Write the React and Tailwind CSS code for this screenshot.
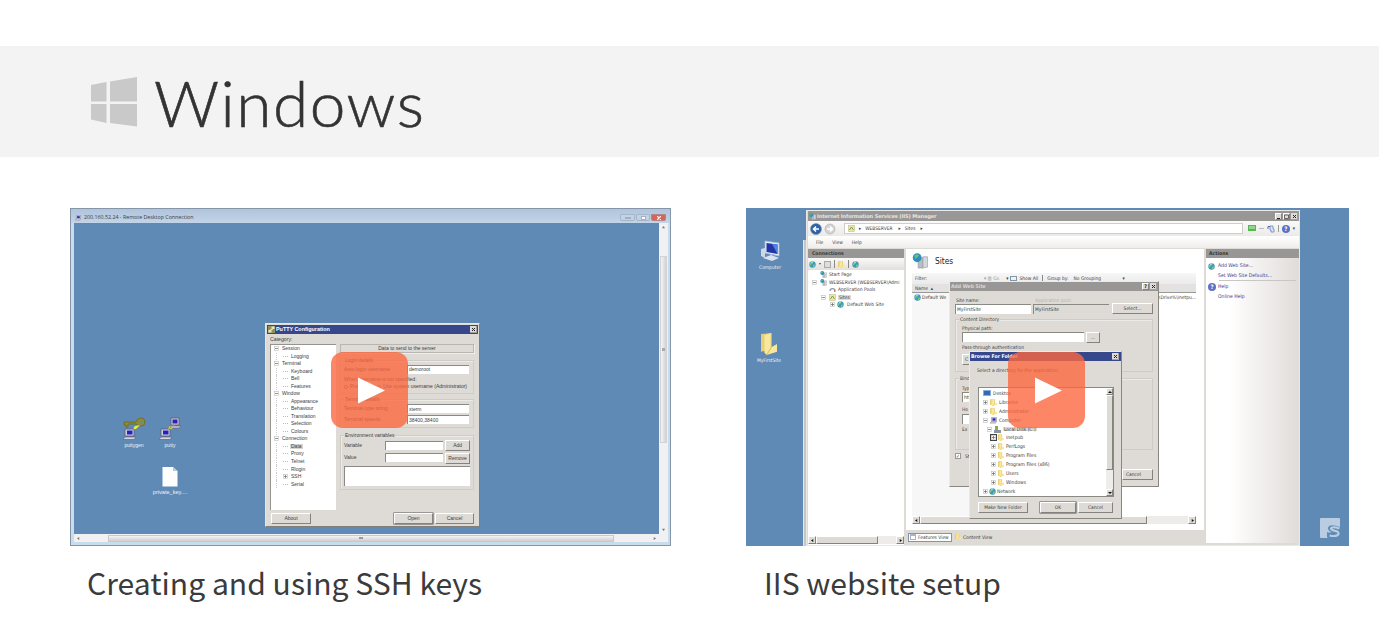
import React from "react";

/* ---------- shared pieces ---------- */

function Play({ className }) {
  return (
    <div
      className={
        "absolute z-20 flex h-[76px] w-[77px] items-center justify-center rounded-[12px] bg-[#fb6840]/80 " + className
      }
    >
      <svg className="ml-[3px] h-[27px] w-[29px]" viewBox="0 0 29 27">
        <path d="M1 0.5L28 13.5L1 26.5Z" fill="#fff" />
      </svg>
    </div>
  );
}

function Btn({ children, className = "" }) {
  return (
    <div
      className={
        "flex items-center justify-center border-[0.5px] border-b-[1px] border-r-[1px] border-white border-b-[#85827e] border-r-[#85827e] bg-[#dedbd6] " +
        className
      }
    >
      {children}
    </div>
  );
}

function Field({ children, className = "" }) {
  return (
    <div
      className={
        "flex items-center border-l border-t border-l-[#8b8984] border-t-[#8b8984] pl-[1px] " + className
      }
    >
      {children}
    </div>
  );
}

function Group({ title, children, className = "" }) {
  return (
    <div className={"relative flex flex-col border border-[#cfccc7] shadow-[inset_1px_1px_0_#eceae7] " + className}>
      <span className="absolute -top-[3px] left-[3px] bg-[#dedbd6] px-[1px]">{title}</span>
      {children}
    </div>
  );
}

function Cross() {
  return (
    <svg className="size-[7px] bg-[#dedbd6]" viewBox="0 0 7 7">
      <path d="M2 2L5 5M5 2L2 5" stroke="#222" strokeWidth="1" />
      <path d="M0 6.5H6.5V0" stroke="#777" strokeWidth=".6" fill="none" />
    </svg>
  );
}

function Expand({ plus }) {
  return (
    <svg className="size-[5px] shrink-0" viewBox="0 0 5 5">
      <rect x=".4" y=".4" width="4.2" height="4.2" fill="#fff" stroke="#bbb" strokeWidth=".6" />
      <path d={plus ? "M1 2.5H4M2.5 1V4" : "M1 2.5H4"} stroke="#666" strokeWidth=".7" />
    </svg>
  );
}

function Folder({ className = "h-[7px] w-[6px]" }) {
  return (
    <svg className={"shrink-0 " + className} viewBox="0 0 14 20" preserveAspectRatio="none">
      <path d="M0 1L9 0V15L0 17Z" fill="#e8cf73" />
      <path d="M3 2L9 0V13L14 10V17L5 20L3 18Z" fill="#f8e79c" />
      <path d="M9 1V13L5 20" stroke="#d3b453" strokeWidth=".8" fill="none" />
    </svg>
  );
}

function Globe({ className = "size-[7px]" }) {
  return (
    <svg className={"shrink-0 " + className} viewBox="0 0 14 14">
      <circle cx="7" cy="7" r="6.4" fill="#3f97bd" />
      <path d="M2 5Q5 0 9 2Q8 6 5 6Q5 9 2 9ZM8 8Q12 6 12 9Q10 13 8 12Z" fill="#7cca7a" />
      <path d="M4 3Q6 1 8 2" stroke="#dff4ff" strokeWidth="1.4" fill="none" />
    </svg>
  );
}

function Help({ className = "size-[8px]" }) {
  return (
    <span
      className={
        "flex shrink-0 items-center justify-center rounded-full bg-[#5a72c4] text-[6px] font-bold text-white " + className
      }
    >
      ?
    </span>
  );
}

function Monitor({ className = "" }) {
  return (
    <svg className={"shrink-0 " + className} viewBox="0 0 14 12">
      <path d="M3 0H13V8H3Z" fill="#cfcde0" stroke="#68647e" strokeWidth=".8" />
      <path d="M5 1.7H11V6.2H5Z" fill="#2823b8" />
      <path d="M2 8.5H13L11 11.5H0Z" fill="#d9d5dc" stroke="#77738a" strokeWidth=".7" />
    </svg>
  );
}

function PuttyIcon() {
  return (
    <svg className="mr-[1px] size-[7px]" viewBox="0 0 7 7">
      <path d="M0 0H7V7H0Z" fill="#8f9058" />
      <path d="M3.500 .5H6.500V3H3.500ZM.5 4H3.500V6.500H.5Z" fill="#e4e2ea" />
      <path d="M2 4L5 3" stroke="#f1ee2c" strokeWidth="1" />
    </svg>
  );
}

/* ---------- first thumbnail: remote desktop with PuTTY ---------- */

const categories = [
  ["Session", 0, "-"],
  ["Logging", 1],
  ["Terminal", 0, "-"],
  ["Keyboard", 1],
  ["Bell", 1],
  ["Features", 1],
  ["Window", 0, "-"],
  ["Appearance", 1],
  ["Behaviour", 1],
  ["Translation", 1],
  ["Selection", 1],
  ["Colours", 1],
  ["Connection", 0, "-"],
  ["Data", 1, "", true],
  ["Proxy", 1],
  ["Telnet", 1],
  ["Rlogin", 1],
  ["SSH", 1, "+"],
  ["Serial", 1],
];

function PuttyTree() {
  return (
    <div className="flex h-[166px] w-[66px] flex-col border-l border-t border-[#96938e] bg-white pl-[3px]">
      {categories.map(([name, depth, box, on]) => (
        <div key={name} className="flex h-[7.53px] shrink-0 items-center">
          {depth === 1 && <span className="ml-[2px] h-full w-[7px] border-l border-dotted border-[#ccc]" />}
          {box ? <Expand plus={box === "+"} /> : <span className="w-[5px] border-t border-dotted border-[#bbb]" />}
          <span className={"ml-[2px] px-[1px] " + (on ? "bg-[#d8d5d0]" : "")}>{name}</span>
        </div>
      ))}
    </div>
  );
}

function PuttyWindow() {
  return (
    <div className="absolute left-[194px] top-[114px] flex h-[204px] w-[215px] flex-col border border-[#e8e6e2] border-b-[#817e79] border-r-[#817e79] bg-[#dedbd6] p-[1px]">
      <div className="flex h-[9px] shrink-0 items-center bg-[#37478b] pl-[1px] pr-[1px] text-[5.400px] font-bold text-white">
        <PuttyIcon />
        PuTTY Configuration
        <span className="ml-auto">
          <Cross />
        </span>
      </div>
      <div className="flex h-[10px] shrink-0 items-center pl-[3px] pt-[1px] text-[5.2px]">Category:</div>
      <div className="flex gap-[4px] pl-[3px]">
        <PuttyTree />
        <div className="flex w-[134px] flex-col">
          <div className="flex h-[9px] items-center justify-center border border-[#b9b6b1] shadow-[1px_1px_0_#eee]">
            Data to send to the server
          </div>
          <Group title="Login details" className="mt-[7px] h-[34px] pl-[3px] pt-[3px]">
            <div className="flex h-[10px] items-center">
              <span className="w-[63px]">Auto-login username</span>
              <Field className="h-[9px] w-[62px] bg-white">demoroot</Field>
            </div>
            <div className="mt-[1px] flex h-[8px] items-center">When username is not specified:</div>
            <div className="flex h-[7px] items-center gap-[2px]">
              <span className="size-[4px] rounded-full border border-[#777] bg-white" />
              Prompt
              <span className="ml-[9px] size-[4px] rounded-full border border-[#777] bg-white" />
              Use system username (Administrator)
            </div>
          </Group>
          <Group title="Terminal details" className="mt-[5px] h-[29px] pl-[3px] pt-[3px]">
            <div className="flex h-[11px] items-center">
              <span className="w-[63px]">Terminal-type string</span>
              <Field className="h-[9px] w-[62px] bg-white">xterm</Field>
            </div>
            <div className="flex h-[11px] items-center">
              <span className="w-[63px]">Terminal speeds</span>
              <Field className="h-[9px] w-[62px] bg-white">38400,38400</Field>
            </div>
          </Group>
          <Group title="Environment variables" className="mt-[7px] h-[55px] px-[3px] pt-[3px]">
            <div className="flex h-[12px] items-center">
              <span className="w-[41px]">Variable</span>
              <Field className="h-[9px] w-[59px] bg-white" />
              <Btn className="ml-[2px] h-[11px] w-[25px]">Add</Btn>
            </div>
            <div className="flex h-[12px] items-center">
              <span className="w-[41px]">Value</span>
              <Field className="h-[9px] w-[59px] bg-white" />
              <Btn className="ml-[2px] mt-[2px] h-[11px] w-[25px]">Remove</Btn>
            </div>
            <Field className="mt-[3px] h-[20px] w-[126px] bg-white" />
          </Group>
        </div>
      </div>
      <div className="mt-[3px] flex pl-[4px]">
        <Btn className="h-[11px] w-[40px]">About</Btn>
        <Btn className="ml-[83px] h-[11px] w-[39px] shadow-[0_0_0_.5px_#555]">Open</Btn>
        <Btn className="ml-[2px] h-[11px] w-[39px]">Cancel</Btn>
      </div>
    </div>
  );
}

function DesktopIcon({ label, className, children }) {
  return (
    <div className={"absolute flex w-[40px] flex-col items-center text-[#eef3f8] " + className}>
      {children}
      <span className="mt-[3px]">{label}</span>
    </div>
  );
}

function SshThumb() {
  return (
    <div className="relative flex h-[338px] w-[601px] flex-col overflow-hidden border border-[#8596a8] bg-[#c9dcec] font-['Liberation_Sans',sans-serif] text-[5px] leading-none whitespace-nowrap text-[#3c3c3c]">
      <div className="flex h-[14px] shrink-0 items-center bg-linear-to-b from-[#b0c4dc] to-[#c2d4e8] pl-[4px] pr-[4px] pt-[3px] font-['Open_Sans',sans-serif] text-[5.3px]">
        <Monitor className="mr-[3px] size-[6px]" />
        200.160.52.24 - Remote Desktop Connection
        <div className="ml-auto flex gap-[1px]">
          <span className="flex h-[7px] w-[15px] items-center justify-center rounded-b-[2px] border-[0.5px] border-[#a3b6cc] bg-[#c3d3e5]">
            <span className="h-[2px] w-[6px] border border-[#a5afbd] bg-white" />
          </span>
          <span className="flex h-[7px] w-[14px] items-center justify-center rounded-b-[2px] border-[0.5px] border-[#a3b6cc] bg-[#c3d3e5]">
            <span className="h-[4px] w-[5px] border border-[#a5afbd] bg-white" />
          </span>
          <span className="flex h-[7px] w-[15px] items-center justify-center rounded-b-[2px] border border-[#b98480] bg-[#d0665c]">
            <svg className="size-[4px]" viewBox="0 0 4 4">
              <path d="M0 0L4 4M4 0L0 4" stroke="#fff" strokeWidth="1.2" />
            </svg>
          </span>
        </div>
      </div>
      <div className="ml-[3px] flex h-[311px] shrink-0">
        <div className="w-[585px] bg-[#5f8ab6]" />
        <div className="flex w-[9px] flex-col items-center bg-[#f1f1f4] py-[3px]">
          <svg className="size-[3px]" viewBox="0 0 4 4">
            <path d="M0 3L2 0L4 3Z" fill="#777" />
          </svg>
          <div className="mt-[27px] flex h-[187px] w-[7px] items-center justify-center border border-[#d3d3d6] bg-linear-to-r from-[#f5f5f5] to-[#d2d2d4]">
            <span className="h-[3px] w-[3px] bg-[#aaa]" />
          </div>
          <svg className="mt-auto size-[3px]" viewBox="0 0 4 4">
            <path d="M0 1L2 4L4 1Z" fill="#777" />
          </svg>
        </div>
      </div>
      <div className="ml-[3px] flex h-[8px] w-[594px] shrink-0 items-center bg-[#f1f1f4] pl-[3px] pr-[12px]">
        <svg className="size-[3px]" viewBox="0 0 4 4">
          <path d="M3 0L0 2L3 4Z" fill="#777" />
        </svg>
        <div className="ml-[28px] flex h-[7px] w-[506px] items-center justify-center border border-[#c9c9cc] bg-linear-to-b from-[#f5f5f5] to-[#cfcfd0]">
          <span className="h-[2px] w-[4px] bg-[#999]" />
        </div>
        <svg className="ml-auto size-[3px]" viewBox="0 0 4 4">
          <path d="M1 0L4 2L1 4Z" fill="#777" />
        </svg>
      </div>
      <DesktopIcon label="puttygen" className="left-[43px] top-[208px]">
        <svg className="h-[23px] w-[23px]" viewBox="0 0 23 23">
          <path d="M1 5H13Q14 1 18 1Q22 1 22 5Q22 9 18 9Q15 9 13 7H5V10H3V8H1Z" fill="#8f8c35" stroke="#6c6a1c" strokeWidth=".8" />
          <circle cx="18.5" cy="4.8" r="1.4" fill="#5f8ab6" />
          <path d="M9 13L12 9L17 8L13 12Z" fill="#f1ee2c" />
          <path d="M2 12H11V19H2Z" fill="#cfcde0" stroke="#5b5873" strokeWidth=".8" />
          <path d="M4 13.5H9.5V17.5H4Z" fill="#2823b8" />
          <path d="M2 20H13L11 22.5H0Z" fill="#d9d5dc" stroke="#5b5873" strokeWidth=".6" />
        </svg>
      </DesktopIcon>
      <DesktopIcon label="putty" className="left-[79px] top-[208px]">
        <svg className="h-[23px] w-[23px]" viewBox="0 0 23 23">
          <path d="M8 13L11 9L16 8L13 12Z" fill="#f1ee2c" />
          <path d="M12 1H20V8H12Z" fill="#cfcde0" stroke="#5b5873" strokeWidth=".8" />
          <path d="M13.5 2.5H18.5V6.5H13.5Z" fill="#2823b8" />
          <path d="M12 9H22L20 11H11Z" fill="#d9d5dc" stroke="#5b5873" strokeWidth=".6" />
          <path d="M2 12H11V19H2Z" fill="#cfcde0" stroke="#5b5873" strokeWidth=".8" />
          <path d="M4 13.5H9.5V17.5H4Z" fill="#2823b8" />
          <path d="M2 20H13L11 22.5H0Z" fill="#d9d5dc" stroke="#5b5873" strokeWidth=".6" />
        </svg>
      </DesktopIcon>
      <DesktopIcon label="private_key...." className="left-[79px] top-[257px] text-[5.600px]">
        <svg className="h-[21px] w-[16px]" viewBox="0 0 16 21">
          <path d="M0.5 1H11L15.500 5V20.500H0.500Z" fill="#fdfdfd" />
          <path d="M11 1V5H15.500Z" fill="#b9c6d6" />
        </svg>
      </DesktopIcon>
      <PuttyWindow />
      <Play className="left-[260px] top-[143px]" />
    </div>
  );
}

/* ---------- second thumbnail: IIS manager ---------- */

function HScroll({ className = "", thumb }) {
  return (
    <div className={"flex h-[8px] shrink-0 items-center bg-[#eeecea] " + className}>
      <Btn className="h-full w-[8px]">
        <svg className="size-[3px]" viewBox="0 0 4 4">
          <path d="M3 0L0 2L3 4Z" fill="#111" />
        </svg>
      </Btn>
      <Btn className={"h-full " + thumb} />
      <Btn className="ml-auto h-full w-[8px]">
        <svg className="size-[3px]" viewBox="0 0 4 4">
          <path d="M1 0L4 2L1 4Z" fill="#111" />
        </svg>
      </Btn>
    </div>
  );
}

function Server({ className = "h-[9px] w-[8px]" }) {
  return (
    <svg className={"shrink-0 " + className} viewBox="0 0 16 17">
      <path d="M6 5H11V16H6Z" fill="#b9bec5" stroke="#8c929b" strokeWidth=".6" />
      <path d="M11 4H16V15L11 16Z" fill="#d4d7db" stroke="#8c929b" strokeWidth=".6" />
      <circle cx="5" cy="5" r="4.700" fill="#2f8fc0" />
      <path d="M2 3Q4 0 7 2Q6 5 3 6Z" fill="#6cc36a" />
    </svg>
  );
}

function SitesIcon({ className = "size-[7px]" }) {
  return (
    <svg className={"shrink-0 " + className} viewBox="0 0 14 14">
      <rect x="1" y="1" width="12" height="12" fill="#f0e69c" stroke="#b5b194" />
      <path d="M3 10L7 4L11 10" stroke="#7a9f58" strokeWidth="2" fill="none" />
    </svg>
  );
}

function Connections() {
  return (
    <div className="flex w-[96px] shrink-0 flex-col overflow-hidden bg-white">
      <div className="flex h-[9px] shrink-0 items-center bg-[#999795] pl-[4px] text-[5.100px] font-bold">Connections</div>
      <div className="flex h-[12px] shrink-0 items-center gap-[3px] bg-linear-to-b from-[#fafafa] to-[#e2dfdc] pl-[1px]">
        <Globe />
        <span className="text-[4px]">▾</span>
        <span className="size-[7px] border border-[#aaa] bg-[#ddd]" />
        <span className="h-[8px] w-px bg-[#888]" />
        <Folder className="h-[7px] w-[7px]" />
        <span className="h-[8px] w-px bg-[#888]" />
        <Globe />
      </div>
      <div className="flex flex-1 flex-col pt-[1px]">
        <div className="flex h-[7.500px] items-center gap-[2px] pl-[12px]">
          <Server className="size-[7px]" />
          Start Page
        </div>
        <div className="flex h-[7.500px] items-center gap-[2px] pl-[4px]">
          <Expand />
          <Server className="ml-[1px] size-[7px]" />
          WEBSERVER (WEBSERVER\Admi
        </div>
        <div className="flex h-[7.500px] items-center gap-[2px] pl-[21px]">
          <svg className="size-[7px]" viewBox="0 0 14 14">
            <path d="M2 10A5 5 0 1 1 12 10" stroke="#8499b4" strokeWidth="2.500" fill="none" />
            <path d="M10 8H13V12H10Z" fill="#d37e5a" />
          </svg>
          Application Pools
        </div>
        <div className="flex h-[7.500px] items-center gap-[2px] pl-[13px]">
          <Expand />
          <SitesIcon className="ml-[1px] size-[7px]" />
          <span className="bg-[#dedbd6] px-[1px]">Sites</span>
        </div>
        <div className="flex h-[7.500px] items-center gap-[2px] pl-[22px]">
          <Expand plus />
          <Globe />
          <span className="ml-[1px]">Default Web Site</span>
        </div>
      </div>
      <HScroll className="mb-[1px]" thumb="w-[62px]" />
    </div>
  );
}

function SitesPane() {
  return (
    <div className="ml-[2px] flex w-[298px] shrink-0 flex-col">
      <div className="flex h-[281px] flex-col bg-white pl-[6px] pr-[8px]">
        <div className="flex h-[24px] shrink-0 items-center gap-[7px] text-[8.300px] text-[#222]">
          <Server className="h-[16px] w-[16px]" />
          Sites
        </div>
        <div className="flex h-[11px] shrink-0 items-center bg-linear-to-b from-[#f7f7f7] to-[#eceaea] pl-[3px]">
          <span className="w-[69px]">Filter:</span>
          <span className="flex items-center gap-[2px] text-[#999]">▾ ▥ Go</span>
          <span className="ml-[7px]">▾</span>
          <span className="mx-[2px] h-[5px] w-[7px] border border-[#8495a5]" />
          Show All
          <span className="mx-[4px] h-[7px] w-px bg-[#888]" />
          Group by:
          <span className="ml-[5px] w-[49px]">No Grouping</span>▾
        </div>
        <div className="flex h-[9px] shrink-0 items-center border-b border-[#999] bg-[#e4e2e0] pl-[3px]">Name&nbsp; ▴</div>
        <div className="flex flex-1 bg-linear-to-r from-[#f7f7f7] from-20% to-white to-20%">
          <div className="flex h-[9px] w-full items-center gap-[1px] pl-[2px]">
            <Globe />
            Default We
            <span className="ml-auto">mDrive%\inetpu...</span>
          </div>
        </div>
        <HScroll className="mb-[6px]" thumb="w-[227px]" />
      </div>
      <div className="flex h-[14px] items-center pl-[2px]">
        <span className="flex h-[9px] w-[44px] items-center gap-[2px] border border-[#8793a6] bg-white px-[1px]">
          <span className="h-[6px] w-[6px] border border-t-2 border-[#aab4cc]" />
          Features View
        </span>
        <Folder className="ml-[3px] mr-[2px] size-[6px]" />
        Content View
      </div>
    </div>
  );
}

function Actions() {
  return (
    <div className="ml-[2px] flex h-[294px] flex-1 flex-col bg-linear-to-r from-white from-25% to-[#e1dcda] text-[#3c3c92]">
      <div className="flex h-[9px] items-center bg-[#999795] pl-[3px] text-[5.100px] font-bold text-[#333]">Actions</div>
      <div className="mt-[3px] flex h-[10px] items-center gap-[3px] pl-[2px] text-[5.100px]">
        <Globe />
        Add Web Site...
      </div>
      <div className="flex h-[9px] items-center pl-[12px] text-[5.100px]">Set Web Site Defaults...</div>
      <div className="ml-[13px] mr-[3px] border-t border-[#c9c6c4]" />
      <div className="mt-[1px] flex h-[10px] items-center gap-[2px] pl-[2px] text-[5.100px]">
        <Help />
        Help
      </div>
      <div className="flex h-[9px] items-center pl-[12px] text-[5.100px]">Online Help</div>
    </div>
  );
}

function IisWindow() {
  return (
    <div className="absolute left-[60px] top-[2px] flex h-[336px] w-[494px] flex-col border border-[#eae8e5] bg-[#dedad6] pl-[1px]">
      <div className="flex h-[10px] shrink-0 items-center bg-[#999795] px-[1px] pt-[1px] font-['DejaVu_Sans',sans-serif] text-[5.100px] font-bold text-[#e6e4e2]">
        <Server className="mr-[1px] size-[7px]" />
        <span className="tracking-[-.15px]">Internet Information Services (IIS) Manager</span>
        <span className="ml-auto flex gap-[1px]">
          <Btn className="h-[7px] w-[7px]">
            <span className="mt-[3px] h-px w-[3px] bg-[#222]" />
          </Btn>
          <Btn className="h-[7px] w-[7px]">
            <svg className="size-[5px]" viewBox="0 0 5 5">
              <path d="M.5 1H4.500V4.500H.5Z" fill="none" stroke="#333" strokeWidth=".7" />
            </svg>
          </Btn>
          <Cross />
        </span>
      </div>
      <div className="flex h-[15px] shrink-0 items-center bg-linear-to-b from-[#fafafa] to-[#eceae8] pl-[2px] pr-[4px]">
        <svg className="h-[12px] w-[27px]" viewBox="0 0 27 12">
          <circle cx="6" cy="6" r="5.500" fill="#2964a8" stroke="#7d8ea2" strokeWidth=".6" />
          <path d="M9 6H4M6 3.500L3.500 6L6 8.500" stroke="#fff" strokeWidth="1.600" fill="none" />
          <circle cx="20" cy="6" r="5" fill="#d4d4d6" stroke="#aaa" strokeWidth=".6" />
          <path d="M17 6H22M20 3.500L22.500 6L20 8.500" stroke="#fff" strokeWidth="1.500" fill="none" />
        </svg>
        <div className="ml-[7px] flex h-[11px] w-[399px] items-center gap-[4px] border border-[#cfcdcb] bg-white pl-[3px]">
          <SitesIcon />
          <span>▸</span>
          <span>WEBSERVER</span>
          <span className="ml-[2px]">▸</span>
          <span>Sites</span>
          <span className="ml-[1px]">▸</span>
        </div>
        <div className="ml-auto flex items-center gap-[3px]">
          <svg className="h-[7px] w-[8px]" viewBox="0 0 8 7">
            <path d="M0 0H8V6H0Z" fill="#55b94e" />
            <path d="M2 1V4M4 1V4M6 1V4" stroke="#eaffea" strokeWidth=".8" />
          </svg>
          <span className="h-px w-[5px] bg-[#bbb]" />
          <svg className="size-[8px]" viewBox="0 0 8 8">
            <path d="M3 1H6V4H7V7H4V5H3Z" fill="#dfe8fb" stroke="#6a84bd" strokeWidth=".8" />
            <path d="M1 4V1.500H3" fill="none" stroke="#4a6ab2" strokeWidth="1" />
          </svg>
          <span className="h-[7px] w-px bg-[#999]" />
          <Help />
          <span>▾</span>
        </div>
      </div>
      <div className="flex h-[12px] shrink-0 items-center gap-[9px] bg-linear-to-b from-white to-[#efedeb] pl-[8px]">
        <span>File</span>
        <span>View</span>
        <span>Help</span>
      </div>
      <div className="flex h-[297px] pt-px">
        <Connections />
        <SitesPane />
        <Actions />
      </div>
    </div>
  );
}

function AddSiteDialog() {
  return (
    <div className="absolute left-[203px] top-[73px] flex h-[206px] w-[210px] flex-col border border-[#eceae7] border-b-[#8a8783] border-r-[#8a8783] bg-[#dedbd6]">
      <div className="flex h-[9px] shrink-0 items-center bg-[#999795] pl-[1px] pr-[1px] text-[5.100px] font-bold text-[#dad8d6]">
        Add Web Site
        <span className="ml-auto flex gap-[1px]">
          <Btn className="size-[7px] text-[#222]">?</Btn>
          <Cross />
        </span>
      </div>
      <div className="flex flex-col px-[5px] pt-[6px]">
        <div className="flex h-[6px] items-center pl-[1px]">
          <span className="w-[79px]">Site name:</span>
          <span className="text-[#b5b2ae]">Application pool:</span>
        </div>
        <div className="flex h-[11px] items-center">
          <Field className="h-[10px] w-[76px] bg-white">MyFirstSite</Field>
          <Field className="ml-[2px] h-[10px] w-[76px]">MyFirstSite</Field>
          <Btn className="ml-[3px] h-[11px] w-[41px]">Select...</Btn>
        </div>
        <Group title="Content Directory" className="mt-[5px] h-[53px] pl-[6px] pt-[5px]">
          <span className="flex h-[6px] items-center">Physical path:</span>
          <div className="flex h-[12px] items-center">
            <Field className="h-[10px] w-[122px] bg-white" />
            <Btn className="ml-[2px] h-[11px] w-[14px]">...</Btn>
          </div>
          <span className="flex h-[9px] items-center">Pass-through authentication</span>
          <Btn className="mt-[2px] h-[11px] w-[42px] !justify-start pl-[2px]">C</Btn>
        </Group>
        <Group title="Bind" className="mt-[6px] h-[72px] pl-[6px] pt-[6px]">
          <span className="flex h-[7px] items-center">Typ</span>
          <Field className="h-[10px] w-[50px] bg-white">htt</Field>
          <span className="mt-[4px] flex h-[7px] items-center">Ho</span>
          <Field className="mt-[1px] h-[10px] w-[120px] bg-white" />
          <span className="mt-[2px] flex h-[6px] items-center">Ex</span>
        </Group>
        <div className="mt-[2px] flex h-[8px] items-center gap-[4px]">
          <span className="flex size-[6px] items-center justify-center border-[0.5px] border-[#999] bg-white text-[5px]">✓</span>
          St
        </div>
        <Btn className="ml-auto mt-[9px] h-[11px] w-[31px] !justify-start pl-[3px]">Cancel</Btn>
      </div>
    </div>
  );
}

const folders = ["inetpub", "PerfLogs", "Program Files", "Program Files (x86)", "Users", "Windows"];

function BrowseDialog() {
  return (
    <div className="absolute left-[223px] top-[143px] flex h-[168px] w-[153px] flex-col border border-[#eceae7] border-b-[#8a8783] border-r-[#8a8783] bg-[#dedbd6]">
      <div className="flex h-[9px] shrink-0 items-center bg-[#37478b] pl-[1px] pr-[2px] text-[5.100px] font-bold text-white">
        Browse For Folder
        <span className="ml-auto">
          <Cross />
        </span>
      </div>
      <div className="flex h-[18px] shrink-0 items-center pl-[7px] pt-[1px]">Select a directory for the application.</div>
      <div className="ml-[8px] mt-[8px] flex h-[110px] w-[136px] shrink-0 border border-[#8b8984] bg-white">
        <div className="flex flex-1 flex-col pl-[4px] pt-[1px]">
          <div className="flex h-[8.900px] items-center gap-[2px]">
            <span className="h-[6px] w-[8px] border border-[#8aaede] bg-[#3467b9]" />
            Desktop
          </div>
          <div className="flex h-[8.900px] items-center gap-[2px]">
            <Expand plus />
            <Folder className="size-[7px]" />
            Libraries
          </div>
          <div className="flex h-[8.900px] items-center gap-[2px]">
            <Expand plus />
            <Folder className="size-[7px]" />
            Administrator
          </div>
          <div className="flex h-[8.900px] items-center gap-[2px]">
            <Expand />
            <Monitor className="size-[7px]" />
            Computer
          </div>
          <div className="flex h-[8.900px] items-center gap-[2px] pl-[4px]">
            <Expand />
            <svg className="size-[7px]" viewBox="0 0 7 7">
              <path d="M0 4H7V7H0Z" fill="#8a969f" />
              <path d="M1 0H4V4H1Z" fill="#87ae4d" />
            </svg>
            <span className="bg-[#dedbd6] px-[1px]">Local Disk (C:)</span>
          </div>
          {folders.map((name, i) => (
            <div key={name} className="flex h-[8.900px] items-center gap-[2px] pl-[8px] text-[5px]">
              <span className={i === 0 ? "outline-1 outline-[#444]" : ""}>
                <Expand plus />
              </span>
              <Folder className="h-[7px] w-[6px]" />
              <span>{name}</span>
            </div>
          ))}
          <div className="flex h-[8.900px] items-center gap-[1px]">
            <Expand plus />
            <Globe />
            Network
          </div>
        </div>
        <div className="flex w-[7px] flex-col bg-[#efedeb]">
          <Btn className="h-[7px]">
            <svg className="size-[4px]" viewBox="0 0 4 4">
              <path d="M0 3L2 1L4 3Z" fill="#111" />
            </svg>
          </Btn>
          <Btn className="h-[75px]" />
          <Btn className="mt-auto h-[7px]">
            <svg className="size-[4px]" viewBox="0 0 4 4">
              <path d="M0 1L2 3L4 1Z" fill="#111" />
            </svg>
          </Btn>
        </div>
      </div>
      <div className="mt-[5px] flex pl-[8px]">
        <Btn className="h-[11px] w-[50px]">Make New Folder</Btn>
        <Btn className="ml-[12px] h-[11px] w-[36px] shadow-[0_0_0_.5px_#555]">OK</Btn>
        <Btn className="ml-[2px] h-[11px] w-[35px]">Cancel</Btn>
      </div>
    </div>
  );
}

function IisThumb() {
  return (
    <div className="relative h-[338px] w-[603px] overflow-hidden bg-[#5f8ab6] font-['DejaVu_Sans_Condensed','DejaVu_Sans',sans-serif] text-[4.900px] leading-none whitespace-nowrap text-[#3c3c3c]">
      <DesktopIcon label="Computer" className="left-[4px] top-[32px]">
        <svg className="h-[22px] w-[23px]" viewBox="0 0 23 22">
          <path d="M6 1L20 3V16L6 13Z" fill="#e4edf8" stroke="#a9bbd2" strokeWidth=".8" />
          <path d="M7.500 3L18.500 4.500V14L7.500 12Z" fill="#2335a8" />
          <path d="M13 4L18.500 4.500V14Z" fill="#4f83dd" />
          <path d="M2 9L6 8V18L2 16Z" fill="#ccd8e8" />
          <path d="M4 18L12 15L20 18L13 21Z" fill="#d9e3ef" />
        </svg>
      </DesktopIcon>
      <DesktopIcon label="MyFirstSite" className="left-[3px] top-[125px]">
        <Folder className="h-[22px] w-[16px]" />
      </DesktopIcon>
      <div className="absolute left-[57px] top-[32px] h-[306px] w-[4px] border-l border-[#e8e8ea] bg-[#c4c6cc]" />
      <IisWindow />
      <AddSiteDialog />
      <BrowseDialog />
      <div className="absolute left-[574px] top-[310px] h-[20px] w-[20px]">
        <svg className="size-full" viewBox="0 0 20 20">
          <path d="M1 0H19Q20 0 20 1V9Q9 5 8 10Q8 13 12 14Q9 15 7 14L7 19L8 20H1Q0 20 0 19V1Q0 0 1 0Z" fill="#b9cce1" />
          <path d="M19.500 10.500Q11.500 8 11 10.500Q11 12 15 12.800Q19 13.500 18.500 16Q17 19 9.500 17.500" fill="none" stroke="#b9cce1" strokeWidth="2.200" />
        </svg>
      </div>
      <Play className="left-[262px] top-[144px]" />
    </div>
  );
}

/* ---------- page ---------- */

function VideoCard({ title, children, titleClass }) {
  return (
    <article>
      {children}
      <h3
        className={
          "mt-[11px] font-['Noto_Sans_CJK_SC','Noto_Sans_CJK_JP',sans-serif] text-[30.100px] leading-[50px] font-normal whitespace-nowrap text-[#3b3b3b] " +
          titleClass
        }
      >
        {title}
      </h3>
    </article>
  );
}

export default function App() {
  return (
    <main className="h-[633px] overflow-hidden bg-white pt-[46px]">
      <header className="flex h-[111px] items-center bg-[#f3f3f3] pl-[91px]">
        <svg className="h-[50px] w-[46px]" viewBox="0 0 46 50">
          <path d="M0 8L15.500 5V24.500H0ZM19 4.500L46 0V24.500H19ZM0 27H15.500V46L0 42.500ZM19 27H46V49.500L19 46Z" fill="#c9c9c9" />
        </svg>
        <h1 className="mt-[2px] ml-[17px] font-['Lato',sans-serif] text-[64px] leading-[80px] font-light tracking-[1.500px] text-[#333] [-webkit-text-stroke:0.6px_#333]">
          Windows
        </h1>
      </header>
      <section className="flex gap-[75px] pl-[70px] pt-[51px]">
        <VideoCard title="Creating and using SSH keys" titleClass="pl-[17px]">
          <SshThumb />
        </VideoCard>
        <VideoCard title="IIS website setup" titleClass="pl-[18px]">
          <IisThumb />
        </VideoCard>
      </section>
    </main>
  );
}
